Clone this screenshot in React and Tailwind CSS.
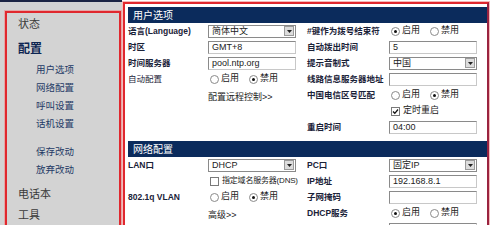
import React from "react";

const Radio = ({ checked }) => (
  <span className="inline-flex items-center justify-center w-[9px] h-[9px] rounded-full border border-[#8a8a8a] bg-white shrink-0">
    {checked && <span className="w-[3px] h-[3px] rounded-full bg-[#111]" />}
  </span>
);

const RadioPair = ({ value }) => (
  <div className="flex items-center text-[9px] text-[#222] pl-[2px]">
    <Radio checked={value === 1} />
    <span className="ml-[2px] w-[28px]">启用</span>
    <Radio checked={value === 2} />
    <span className="ml-[2px]">禁用</span>
  </div>
);

const Input = ({ value }) => (
  <div className="w-[88px] h-[13px] border border-[#8a8a8a] border-b-[#c8c8c8] border-r-[#c8c8c8] bg-white flex items-center pl-[3px] text-[9px] text-[#222] leading-none">
    {value}
  </div>
);

const Select = ({ value }) => (
  <div className="w-[88px] h-[13px] border border-[#8a8a8a] bg-white flex items-center text-[9px] text-[#222] leading-none">
    <span className="flex-1 pl-[3px]">{value}</span>
    <span className="w-[10px] h-[10px] mr-[1px] bg-[#dcdcdc] border border-[#9a9a9a] flex items-center justify-center">
      <svg width="5" height="3" viewBox="0 0 5 3">
        <path d="M0 0 L5 0 L2.5 3 Z" fill="#222" />
      </svg>
    </span>
  </div>
);

const Check = ({ checked, label, small }) => (
  <div className={`flex items-center ${small ? "text-[8px] tracking-[-0.2px]" : "text-[9px]"} text-[#222] pl-[2px] whitespace-nowrap`}>
    <span className="w-[9px] h-[9px] border border-[#7a7a7a] bg-white flex items-center justify-center shrink-0">
      {checked && (
        <svg width="7" height="7" viewBox="0 0 7 7">
          <path d="M1 3.5 L2.8 5.3 L6 1.5" stroke="#111" strokeWidth="1.3" fill="none" />
        </svg>
      )}
    </span>
    <span className="ml-[3px]">{label}</span>
  </div>
);

const Row = ({ label, children, bold = true, lw = "w-[80px]" }) => (
  <div className="h-[16px] flex items-center">
    <div className={`${lw} shrink-0 text-[8.5px] text-[#1a2238] ${bold ? "font-bold" : ""} whitespace-nowrap overflow-visible`}>
      {label}
    </div>
    <div className="whitespace-nowrap">{children}</div>
  </div>
);

const Header = ({ title }) => (
  <div className="w-[361px] h-[16px] bg-[#0b2b5c] flex items-center pl-[5px] text-[10px] text-white">
    {title}
  </div>
);

export default function App() {
  return (
    <div
      className="relative w-[500px] h-[225px] overflow-hidden bg-white flex"
      style={{ fontFamily: '"Liberation Sans", "Noto Sans CJK SC", sans-serif' }}
    >
      {/* Sidebar */}
      <div className="w-[122px] h-full shrink-0 bg-[#d3d3d3] border-t-2 border-[#1c2444] flex flex-col pl-[18px] pt-[13px]">
        <div className="h-[20px] flex items-center text-[11px] text-[#3a3a3a]">状态</div>
        <div className="mt-[5px] h-[20px] flex items-center text-[12px] font-bold text-[#0d2552]">配置</div>
        <div className="pl-[18px] flex flex-col text-[9.5px] text-[#243a66]">
          <div className="mt-[3px] h-[18px] flex items-center">用户选项</div>
          <div className="h-[18px] flex items-center">网络配置</div>
          <div className="h-[18px] flex items-center">呼叫设置</div>
          <div className="h-[18px] flex items-center">话机设置</div>
          <div className="mt-[10px] h-[18px] flex items-center">保存改动</div>
          <div className="h-[18px] flex items-center">放弃改动</div>
        </div>
        <div className="mt-[5px] h-[20px] flex items-center text-[11px] text-[#3a3a3a]">电话本</div>
        <div className="mt-[2px] h-[20px] flex items-center text-[11px] text-[#3a3a3a]">工具</div>
      </div>

      {/* Main */}
      <div className="flex-1 pl-[6px] pt-[7px]">
        <Header title="用户选项" />
        <div className="flex">
          <div className="w-[179px] shrink-0 flex flex-col">
            <Row label="语言(Language)"><Select value="简体中文" /></Row>
            <Row label="时区"><Input value="GMT+8" /></Row>
            <Row label="时间服务器"><Input value="pool.ntp.org" /></Row>
            <Row label="自动配置" bold={false}><RadioPair value={2} /></Row>
            <Row label=""><span className="text-[9px] text-[#222]">配置远程控制&gt;&gt;</span></Row>
          </div>
          <div className="flex flex-col">
            <Row label="#键作为拨号结束符" lw="w-[82px]"><RadioPair value={1} /></Row>
            <Row label="自动拨出时间" lw="w-[82px]"><Input value="5" /></Row>
            <Row label="提示音制式" lw="w-[82px]"><Select value="中国" /></Row>
            <Row label="线路信息服务器地址" lw="w-[82px]"><Input value="" /></Row>
            <Row label="中国电信区号匹配" lw="w-[82px]"><RadioPair value={2} /></Row>
            <Row label="" lw="w-[82px]"><Check checked label="定时重启" /></Row>
            <Row label="重启时间" lw="w-[82px]"><Input value="04:00" /></Row>
          </div>
        </div>

        <div className="mt-[6px]">
          <Header title="网络配置" />
        </div>
        <div className="flex">
          <div className="w-[179px] shrink-0 flex flex-col">
            <Row label="LAN口"><Select value="DHCP" /></Row>
            <Row label=""><Check small label="指定域名服务器(DNS)" /></Row>
            <Row label="802.1q VLAN"><RadioPair value={2} /></Row>
            <Row label=""><span className="text-[9px] text-[#222]">高级&gt;&gt;</span></Row>
          </div>
          <div className="flex flex-col">
            <Row label="PC口" lw="w-[82px]"><Select value="固定IP" /></Row>
            <Row label="IP地址" lw="w-[82px]"><Input value="192.168.8.1" /></Row>
            <Row label="子网掩码" lw="w-[82px]"><Input value="" /></Row>
            <Row label="DHCP服务" lw="w-[82px]"><RadioPair value={1} /></Row>
            <Row label="" lw="w-[82px]"><Input value="" /></Row>
          </div>
        </div>
      </div>

      {/* Red annotation rectangles */}
      <div className="absolute left-[5px] top-[11px] w-[116px] h-[230px] border-2 border-[#e0282e] shadow-[0_0_0_1px_rgba(240,140,140,0.6)] pointer-events-none" />
      <div className="absolute left-[123px] top-[2px] w-[366px] h-[240px] border-2 border-[#e0282e] border-r-[#9a2340] shadow-[0_0_0_1px_rgba(240,140,140,0.6)] pointer-events-none" />
    </div>
  );
}
